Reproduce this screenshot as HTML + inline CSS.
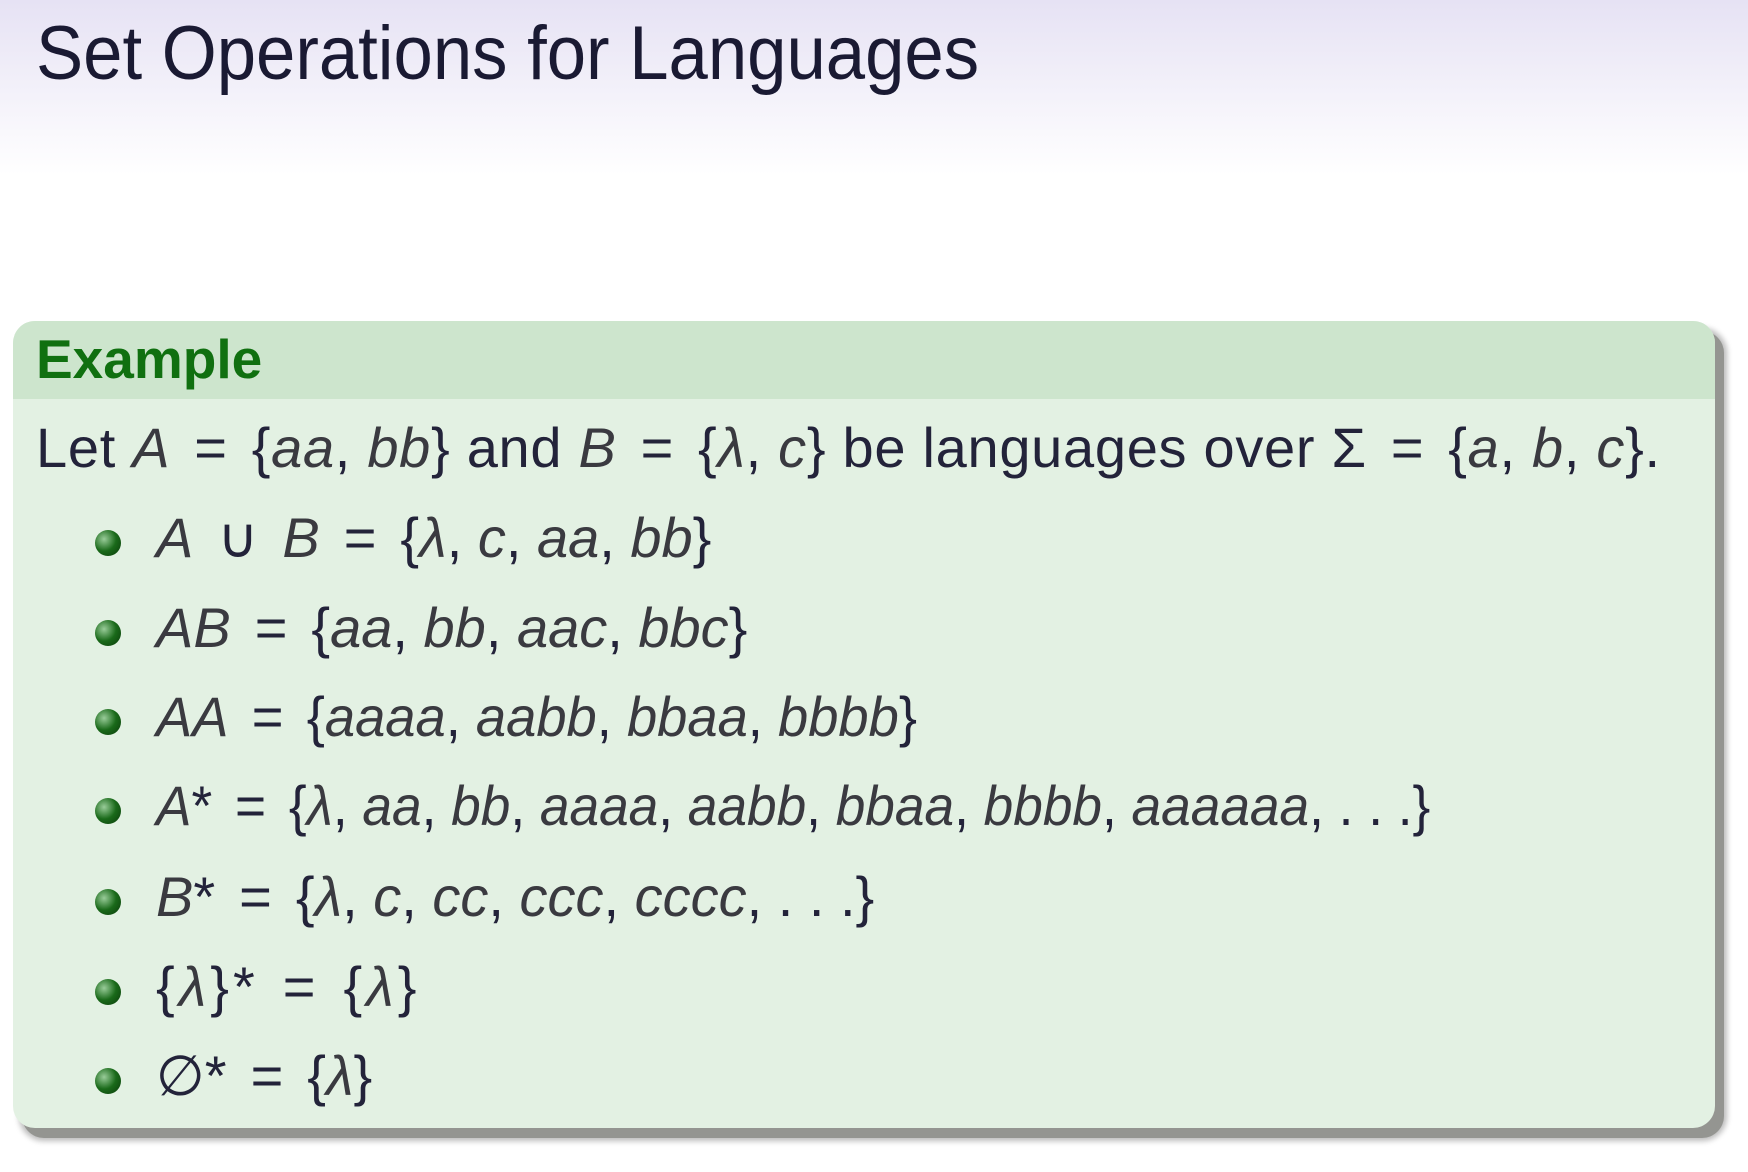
<!DOCTYPE html>
<html><head><meta charset="utf-8"><style>
html,body{margin:0;padding:0;width:1748px;height:1172px;overflow:hidden;background:#fff;font-family:"Liberation Sans","DejaVu Sans",sans-serif;}
.hdr{position:absolute;left:0;top:0;width:1748px;height:175px;background:linear-gradient(#e6e2f4,#fff);}
.title{position:absolute;left:36px;top:10px;font-size:76px;color:#1a1a33;white-space:nowrap;transform:scaleX(0.93);transform-origin:0 0;}
.shadow{position:absolute;left:22px;top:331px;width:1702px;height:807px;border-radius:22px;background:#949591;box-shadow:0 0 6px 3px #bbb;}
.box{position:absolute;left:13px;top:321px;width:1702px;height:807px;border-radius:22px;background:#e3f1e3;overflow:hidden;}
.bh{position:absolute;left:0;top:0;width:100%;height:78px;background:#cde5cd;}
.ex{position:absolute;left:23px;top:6px;font-size:55px;font-weight:bold;color:#107010;}
.l{position:absolute;white-space:nowrap;font-size:56px;color:#23233a;transform-origin:0 50%;}
i{font-style:italic;color:#3a3a40}
.o{margin:0 24px;}
.b{position:absolute;width:26px;height:26px;border-radius:50%;background:radial-gradient(circle at 35% 35%,#9c9,#1a6a1a 50%,#0a3a0a);}
</style></head><body>
<div class="hdr"></div>
<div class="title">Set Operations for Languages</div>
<div class="shadow"></div>
<div class="box"><div class="bh"></div><div class="ex">Example</div></div>
<div class="l" style="left:36px;top:415px;letter-spacing:0.7px">Let <i>A</i><span class="o">=</span>{<i>aa</i>, <i>bb</i>} and <i>B</i><span class="o">=</span>{<i>λ</i>, <i>c</i>} be languages over Σ<span class="o">=</span>{<i>a</i>, <i>b</i>, <i>c</i>}.</div>
<div class="b" style="left:95px;top:530px"></div><div class="l" style="left:156px;top:505px"><i>A</i><span class="o">∪</span><i>B</i><span class="o">=</span>{<i>λ</i>, <i>c</i>, <i>aa</i>, <i>bb</i>}</div>
<div class="b" style="left:95px;top:620px"></div><div class="l" style="left:156px;top:595px"><i>AB</i><span class="o">=</span>{<i>aa</i>, <i>bb</i>, <i>aac</i>, <i>bbc</i>}</div>
<div class="b" style="left:95px;top:709px"></div><div class="l" style="left:156px;top:684px;transform:scaleX(0.97)"><i>AA</i><span class="o">=</span>{<i>aaaa</i>, <i>aabb</i>, <i>bbaa</i>, <i>bbbb</i>}</div>
<div class="b" style="left:95px;top:798px"></div><div class="l" style="left:156px;top:773px;transform:scaleX(0.95)"><i>A</i>*<span class="o">=</span>{<i>λ</i>, <i>aa</i>, <i>bb</i>, <i>aaaa</i>, <i>aabb</i>, <i>bbaa</i>, <i>bbbb</i>, <i>aaaaaa</i>, . . .}</div>
<div class="b" style="left:95px;top:889px"></div><div class="l" style="left:156px;top:864px"><i>B</i>*<span class="o">=</span>{<i>λ</i>, <i>c</i>, <i>cc</i>, <i>ccc</i>, <i>cccc</i>, . . .}</div>
<div class="b" style="left:95px;top:979px"></div><div class="l" style="left:156px;top:954px;letter-spacing:4px">{<i>λ</i>}*<span class="o">=</span>{<i>λ</i>}</div>
<div class="b" style="left:95px;top:1068px"></div><div class="l" style="left:156px;top:1043px">∅*<span class="o">=</span>{<i>λ</i>}</div>
</body></html>
